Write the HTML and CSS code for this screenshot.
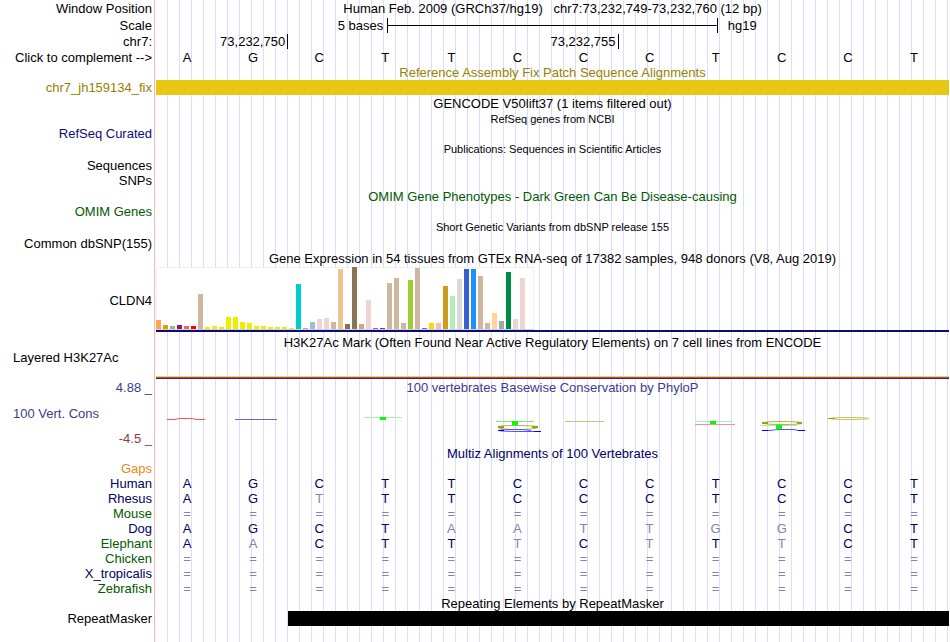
FILE: index.html
```
<!DOCTYPE html>
<html lang="en">
  <head>
    <meta charset="UTF-8" />
    <meta name="viewport" content="width=device-width, initial-scale=1.0" />
    <title>Human chr7:73,232,749-73,232,760</title>
    <link rel="stylesheet" href="styles.css">
  </head>
  <body>
    <main class="browser">
      <!-- position and scale -->
      <div class="row h16">
        <span class="label">Window Position</span>
        <div class="title">Human Feb. 2009 (GRCh37/hg19) &nbsp; chr7:73,232,749-73,232,760 (12 bp)</div>
      </div>
      <div class="row h18">
        <span class="label">Scale</span>
        <div class="scale">
          <span class="scale-size">5 bases</span>
          <span class="scale-bar"></span>
          <span class="scale-db">hg19</span>
        </div>
      </div>
      <div class="row h15">
        <span class="label">chr7:</span>
        <div class="ruler">
          <span class="tick tick-first">73,232,750</span>
          <span class="tick tick-second">73,232,755</span>
        </div>
      </div>
      <div class="row h16">
        <button class="label complement" type="button">Click to complement --&gt;</button>
        <div class="bases">
          <span>A</span><span>G</span><span>C</span><span>T</span><span>T</span><span>C</span>
          <span>C</span><span>C</span><span>T</span><span>C</span><span>C</span><span>T</span>
        </div>
      </div>

      <!-- fix patch -->
      <div class="row h15"><div class="title gold">Reference Assembly Fix Patch Sequence Alignments</div></div>
      <div class="row h15">
        <span class="label gold">chr7_jh159134_fix</span>
        <div class="patch"></div>
      </div>

      <!-- genes and variants -->
      <div class="row h17"><div class="title">GENCODE V50lift37 (1 items filtered out)</div></div>
      <div class="row h14"><div class="title small">RefSeq genes from NCBI</div></div>
      <div class="row h15"><span class="label refseq">RefSeq Curated</span></div>
      <div class="row h17"><div class="title small">Publications: Sequences in Scientific Articles</div></div>
      <div class="row h14"><span class="label">Sequences</span></div>
      <div class="row h17"><span class="label">SNPs</span></div>
      <div class="row h15"><div class="title green">OMIM Gene Phenotypes - Dark Green Can Be Disease-causing</div></div>
      <div class="row h15"><span class="label green">OMIM Genes</span></div>
      <div class="row h17"><div class="title small">Short Genetic Variants from dbSNP release 155</div></div>
      <div class="row h14"><span class="label">Common dbSNP(155)</span></div>

      <!-- gene expression -->
      <div class="row h17"><div class="title">Gene Expression in 54 tissues from GTEx RNA-seq of 17382 samples, 948 donors (V8, Aug 2019)</div></div>
      <div class="row expression">
        <span class="label">CLDN4</span>
        <div class="gene">
          <div class="bars">
            <i class="adipose" style="height: 9px"></i>
            <i class="adrenal" style="height: 4px"></i>
            <i class="artery" style="height: 3px"></i>
            <i class="plum" style="height: 4px"></i>
            <i class="coral" style="height: 3px"></i>
            <i class="red" style="height: 3px"></i>
            <i class="tan" style="height: 35px"></i>
            <i class="brain" style="height: 2px"></i>
            <i class="brain" style="height: 3px"></i>
            <i class="brain" style="height: 2px"></i>
            <i class="brain" style="height: 12px"></i>
            <i class="brain" style="height: 12px"></i>
            <i class="brain" style="height: 7px"></i>
            <i class="brain" style="height: 6px"></i>
            <i class="brain" style="height: 3px"></i>
            <i class="brain" style="height: 3px"></i>
            <i class="brain" style="height: 2px"></i>
            <i class="brain" style="height: 2px"></i>
            <i class="brain" style="height: 2px"></i>
            <i class="brain" style="height: 1px"></i>
            <i class="breast" style="height: 45px"></i>
            <i class="violet" style="height: 1px"></i>
            <i class="fibroblast" style="height: 7px"></i>
            <i class="rose" style="height: 10px"></i>
            <i class="rose" style="height: 11px"></i>
            <i class="tan" style="height: 7px"></i>
            <i class="colon" style="height: 60px"></i>
            <i class="esophagus" style="height: 5px"></i>
            <i class="esophagus" style="height: 62px"></i>
            <i class="muscularis" style="height: 5px"></i>
            <i class="rose" style="height: 29px"></i>
            <i class="orchid" style="height: 1px"></i>
            <i class="heart" style="height: 1px"></i>
            <i class="tan" style="height: 46px"></i>
            <i class="tan" style="height: 51px"></i>
            <i class="tan" style="height: 6px"></i>
            <i class="lung" style="height: 49px"></i>
            <i class="tan" style="height: 61px"></i>
            <i class="muscle" style="height: 1px"></i>
            <i class="nerve" style="height: 6px"></i>
            <i class="ovary" style="height: 6px"></i>
            <i class="pancreas" style="height: 43px"></i>
            <i class="pituitary" style="height: 33px"></i>
            <i class="prostate" style="height: 50px"></i>
            <i class="skin" style="height: 60px"></i>
            <i class="skin-leg" style="height: 60px"></i>
            <i class="tan" style="height: 53px"></i>
            <i class="tan" style="height: 6px"></i>
            <i class="stomach" style="height: 16px"></i>
            <i class="testis" style="height: 8px"></i>
            <i class="thyroid" style="height: 57px"></i>
            <i class="rose" style="height: 10px"></i>
            <i class="rose" style="height: 51px"></i>
            <i class="blood" style="height: 0px"></i>
          </div>
        </div>
      </div>

      <!-- histone marks -->
      <div class="row h16"><div class="title">H3K27Ac Mark (Often Found Near Active Regulatory Elements) on 7 cell lines from ENCODE</div></div>
      <div class="row histone">
        <span class="label left">Layered H3K27Ac</span>
        <div class="signal"></div>
      </div>

      <!-- conservation -->
      <div class="row conservation">
        <div class="axis">
          <span class="cons">4.88 _</span>
          <span class="cons left">100 Vert. Cons</span>
          <span class="neg">-4.5 _</span>
        </div>
        <div class="plot">
          <div class="title cons">100 vertebrates Basewise Conservation by PhyloP</div>
          <svg class="logo" viewBox="0 0 793 50" preserveAspectRatio="none" aria-hidden="true">
            <g fill="none" stroke-width="1">
              <path stroke="#ff5050" d="M11 23.5H19L23 22.5H36L40 23.5H49" />
              <path stroke="#6464f0" d="M79 23.5H121" />
              <path stroke="#a8f0a8" d="M208 21.5H246" />
              <path stroke="#70f070" d="M340 25.5H378" />
              <path stroke="#c4c478" d="M409 25.5H448" />
              <path stroke="#a8f0a8" d="M539 25.5H576" />
              <path stroke="#ff8c8c" d="M539 28.5H579" />
              <path stroke="#a8f0a8" d="M604 29.5H641" />
              <path stroke="#b4b43c" d="M382 30.5Q374 29.5 362 29.5Q342 29.5 342 31Q342 33.5 362 33.5Q378 33.5 382 31.5" />
              <path stroke="#a0a000" stroke-width="2" d="M342 31H348M376 31H382" />
              <path stroke="#5050ff" d="M385 35.5H376Q374 33.5 362 33.5Q344 33.5 343 34.5Q346 35.5 362 35.5H376" />
              <path stroke="#0000ff" d="M342 34.5H348M378 35.5H385" />
              <path stroke="#b4b43c" d="M646 26.5Q640 25.5 626 25.5Q608 25.5 607 27Q608 28.5 626 28.5Q642 28.5 646 27.5" />
              <path stroke="#a0a000" stroke-width="2" d="M606 27H612M641 27H646" />
              <path stroke="#5050ff" d="M606 34.5H614Q618 33.5 628 33.5H638L642 34.5H649" />
              <path stroke="#0000ff" d="M606 34.5H612M642 34.5H649" />
              <path stroke="#c4c45a" d="M713 22.5Q709 21.5 693 21.5Q676 21.5 674 22.5Q676 23.5 693 23.5Q709 23.5 713 22.5" />
              <path stroke="#a0a000" d="M672 22.5H679" />
            </g>
            <path fill="#00ff00" d="M224 21h6v3h-6zM356 25h6v4h-6zM554 25h6v3h-6zM620 29h6v4h-6z" />
          </svg>
        </div>
      </div>

      <!-- multiz -->
      <div class="row h15"><div class="title navy">Multiz Alignments of 100 Vertebrates</div></div>
      <table class="alignment">
        <tr class="gaps"><th scope="row">Gaps</th><td colspan="12"></td></tr>
        <tr>
          <th scope="row">Human</th>
          <td>A</td><td>G</td><td>C</td><td>T</td><td>T</td><td>C</td><td>C</td><td>C</td><td>T</td><td>C</td><td>C</td><td>T</td>
        </tr>
        <tr>
          <th scope="row">Rhesus</th>
          <td>A</td><td>G</td><td class="diff">T</td><td>T</td><td>T</td><td>C</td><td>C</td><td>C</td><td>T</td><td>C</td><td>C</td><td>T</td>
        </tr>
        <tr class="missing">
          <th scope="row">Mouse</th>
          <td>=</td><td>=</td><td>=</td><td>=</td><td>=</td><td>=</td><td>=</td><td>=</td><td>=</td><td>=</td><td>=</td><td>=</td>
        </tr>
        <tr>
          <th scope="row">Dog</th>
          <td>A</td><td>G</td><td>C</td><td>T</td><td class="diff">A</td><td class="diff">A</td><td class="diff">T</td><td class="diff">T</td><td class="diff">G</td><td class="diff">G</td><td>C</td><td>T</td>
        </tr>
        <tr>
          <th scope="row" class="green">Elephant</th>
          <td>A</td><td class="diff">A</td><td>C</td><td>T</td><td>T</td><td class="diff">T</td><td>C</td><td class="diff">T</td><td>T</td><td class="diff">T</td><td>C</td><td>T</td>
        </tr>
        <tr class="missing">
          <th scope="row">Chicken</th>
          <td>=</td><td>=</td><td>=</td><td>=</td><td>=</td><td>=</td><td>=</td><td>=</td><td>=</td><td>=</td><td>=</td><td>=</td>
        </tr>
        <tr class="missing">
          <th scope="row" class="navy">X_tropicalis</th>
          <td>=</td><td>=</td><td>=</td><td>=</td><td>=</td><td>=</td><td>=</td><td>=</td><td>=</td><td>=</td><td>=</td><td>=</td>
        </tr>
        <tr class="missing">
          <th scope="row">Zebrafish</th>
          <td>=</td><td>=</td><td>=</td><td>=</td><td>=</td><td>=</td><td>=</td><td>=</td><td>=</td><td>=</td><td>=</td><td>=</td>
        </tr>
      </table>

      <!-- repeats -->
      <div class="row h15"><div class="title">Repeating Elements by RepeatMasker</div></div>
      <div class="row h15">
        <span class="label">RepeatMasker</span>
        <div class="bases"><div class="repeat"></div></div>
      </div>
    </main>
  </body>
</html>
```

FILE: styles.css
```
* {
  box-sizing: border-box;
}
body {
  margin: 0;
  background-color: white;
  color: black;
  font-family: "Liberation Sans", Arial, sans-serif;
  font-size: 13px;
  line-height: 15px;
}
/* pink divider and the vertical guide lines */
.browser {
  min-height: 100vh;
  padding-right: 1px;
  background-image: linear-gradient(#ffb4b4, #ffb4b4),
    repeating-linear-gradient(to right, transparent 0 11px, #dcdcff 11px 12px);
  background-size: 1px 100%, 100% 100%;
  background-position: 154px 0, 156px 0;
  background-repeat: no-repeat;
}
.row {
  display: grid;
  grid-template-columns: 152px minmax(0, 1fr);
  column-gap: 4px;
  align-items: center;
  white-space: nowrap;
}
.h14 {
  height: 14px;
}
.h15 {
  height: 15px;
}
.h16 {
  height: 16px;
}
.h17 {
  height: 17px;
}
.h18 {
  height: 18px;
}
.label {
  grid-column: 1;
  text-align: right;
}
.left {
  padding-left: 13px;
  text-align: left;
}
.title {
  grid-column: 2;
  text-align: center;
}
.small {
  font-size: 11px;
}
.gold {
  color: #968200;
}
.green {
  color: #005a00;
}
.refseq {
  color: #0c0c78;
}
.navy {
  color: #000064;
}
.cons {
  color: #3c3c8c;
}
.neg {
  color: #8c3c3c;
}
.complement {
  padding: 0;
  border: 0;
  background: none;
  color: inherit;
  font: inherit;
  cursor: pointer;
}

/* scale and ruler, half a base per column */
.scale,
.ruler {
  display: grid;
  grid-template-columns: repeat(24, minmax(0, 1fr));
  align-items: center;
}
.scale-size {
  grid-column: 1 / 8;
  padding-right: 4px;
  text-align: right;
}
.scale-bar {
  grid-column: 8 / 18;
  height: 15px;
  border: solid black;
  border-width: 0 1px;
  background: linear-gradient(black, black) center / 100% 1px no-repeat;
}
.scale-db {
  grid-column: 18 / 25;
  padding-left: 10px;
}
.tick {
  grid-row: 1;
  height: 15px;
  padding-right: 2px;
  border-right: 1px solid black;
  text-align: right;
}
.tick-first {
  grid-column: 1 / 5;
}
.tick-second {
  grid-column: 5 / 15;
}
.bases {
  display: grid;
  grid-template-columns: repeat(12, minmax(0, 1fr));
}
.bases span {
  padding-right: 4px;
  text-align: center;
}
.patch {
  height: 15px;
  background-color: #e6c814;
}
.repeat {
  grid-column: 3 / 13;
  height: 15px;
  background-color: black;
}

/* gene expression bars */
.expression {
  height: 67px;
}
.gene {
  align-self: start;
  border-bottom: 2px solid #0c0c78;
}
.bars {
  display: flex;
  align-items: flex-end;
  gap: 2px;
  width: 378px;
  height: 63px;
  border-bottom: 1px solid #d2d2d2;
  background-color: white;
  box-shadow: inset 0 1px #f0f0f0, inset 1px 0 #f0f0f0, inset -1px 0 #f0f0f0;
}
.bars i {
  width: 5px;
}
.adipose { background-color: #ffa54f; }
.adrenal { background-color: #ee9a00; }
.artery { background-color: #8fbc8f; }
.plum { background-color: #8b1c62; }
.coral { background-color: #ee6a50; }
.red { background-color: #ff0000; }
.tan { background-color: #cdb79e; }
.brain { background-color: #eeee00; }
.breast { background-color: #00cdcd; }
.violet { background-color: #ee82ee; }
.fibroblast { background-color: #9ac0cd; }
.rose { background-color: #eed5d2; }
.colon { background-color: #eec591; }
.esophagus { background-color: #8b7355; }
.muscularis { background-color: #cdaa7d; }
.orchid { background-color: #b452cd; }
.heart { background-color: #7a378b; }
.lung { background-color: #9acd32; }
.muscle { background-color: #7a67ee; }
.nerve { background-color: #ffd700; }
.ovary { background-color: #ffb6c1; }
.pancreas { background-color: #cd9b1d; }
.pituitary { background-color: #b4eeb4; }
.prostate { background-color: #d9d9d9; }
.skin { background-color: #3a5fcd; }
.skin-leg { background-color: #1e90ff; }
.stomach { background-color: #ffd39b; }
.testis { background-color: #a6a6a6; }
.thyroid { background-color: #008b45; }
.blood { background-color: #ff00ff; }

.histone {
  height: 30px;
  align-items: start;
}
.signal {
  height: 3px;
  margin-top: 26px;
  background-image: linear-gradient(#ffc864 0 1px, #9b5f46 1px 2px, #5a1464 2px 3px);
}

.conservation {
  height: 66px;
  align-items: stretch;
}
.axis {
  display: flex;
  flex-direction: column;
  justify-content: space-between;
  text-align: right;
}
.axis .left {
  text-align: left;
}
.plot .title {
  height: 16px;
}
.logo {
  display: block;
  width: 100%;
  height: 50px;
}

.alignment {
  width: 100%;
  table-layout: fixed;
  border-spacing: 0;
  color: #000064;
}
.alignment th {
  width: 156px;
  height: 15px;
  padding: 0 4px 0 0;
  font-weight: normal;
  text-align: right;
}
.alignment td {
  padding: 0 4px 0 0;
  text-align: center;
}
.alignment .missing th {
  color: #005a00;
}
.alignment .missing th.navy {
  color: #000064;
}
.alignment .green {
  color: #005a00;
}
.alignment .gaps th {
  color: #e68c14;
}
.missing td,
.diff {
  color: #8282b4;
}
```
